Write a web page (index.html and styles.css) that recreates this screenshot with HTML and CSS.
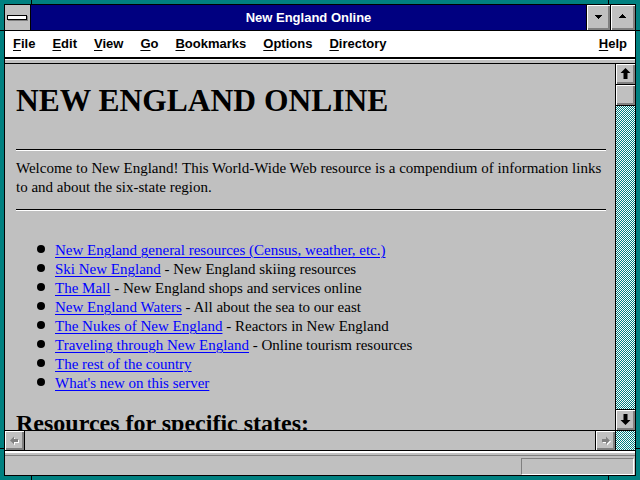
FILE: index.html
```html
<!DOCTYPE html>
<html>
<head>
<meta charset="utf-8">
<title>New England Online</title>
<link rel="stylesheet" href="styles.css">
</head>
<body>
<div class="window">
  <div class="titlebar">
    <div class="sysmenu"><span class="sysbar"></span></div>
    <div class="title">New England Online</div>
    <div class="tbtn tbtn-min"><svg class="tri" width="7" height="4" viewBox="0 0 7 4"><path d="M0 0h7v1H0zM1 1h5v1H1zM2 2h3v1H2zM3 3h1v1H3z" fill="#000"/></svg></div>
    <div class="tbtn tbtn-max"><svg class="tri" width="7" height="4" viewBox="0 0 7 4"><path d="M3 0h1v1H3zM2 1h3v1H2zM1 2h5v1H1zM0 3h7v1H0z" fill="#000"/></svg></div>
  </div>
  <div class="menubar">
    <span class="mi"><u>F</u>ile</span>
    <span class="mi"><u>E</u>dit</span>
    <span class="mi"><u>V</u>iew</span>
    <span class="mi"><u>G</u>o</span>
    <span class="mi"><u>B</u>ookmarks</span>
    <span class="mi"><u>O</u>ptions</span>
    <span class="mi"><u>D</u>irectory</span>
    <span class="mi help"><u>H</u>elp</span>
  </div>
  <div class="strip"></div>
  <div class="main">
    <div class="content">
      <h1>NEW ENGLAND ONLINE</h1>
      <hr>
      <p>Welcome to New England! This World-Wide Web resource is a compendium of information links to and about the six-state region.</p>
      <hr class="second">
      <ul>
        <li><a href="#">New England general resources (Census, weather, etc.)</a></li>
        <li><a href="#">Ski New England</a> - New England skiing resources</li>
        <li><a href="#">The Mall</a> - New England shops and services online</li>
        <li><a href="#">New England Waters</a> - All about the sea to our east</li>
        <li><a href="#">The Nukes of New England</a> - Reactors in New England</li>
        <li><a href="#">Traveling through New England</a> - Online tourism resources</li>
        <li><a href="#">The rest of the country</a></li>
        <li><a href="#">What's new on this server</a></li>
      </ul>
      <h2>Resources for specific states:</h2>
    </div>
    <div class="vscroll">
      <div class="sbtn up"><svg width="19" height="20" viewBox="0 0 19 20"><path d="M9.5 4L14.5 9H11.5V15H7.5V9H4.5Z" fill="#000"/></svg></div>
      <div class="thumb"></div>
      <div class="track"></div>
      <div class="sbtn down"><svg width="19" height="20" viewBox="0 0 19 20"><path d="M9.5 15L14.5 10H11.5V4H7.5V10H4.5Z" fill="#000"/></svg></div>
    </div>
    <div class="hscroll">
      <div class="sbtn left"><svg width="19" height="19" viewBox="0 0 19 19"><path d="M6 10.5L10 6.5V9H14V12H10V14.5Z" fill="#fff"/><path d="M5 9.5L9 5.5V8H13V11H9V13.5Z" fill="#808080"/></svg></div>
      <div class="htrack"></div>
      <div class="sbtn right"><svg width="19" height="19" viewBox="0 0 19 19"><path d="M15 10.5L11 6.5V9H7V12H11V14.5Z" fill="#fff"/><path d="M14 9.5L10 5.5V8H6V11H10V13.5Z" fill="#808080"/></svg></div>
    </div>
    <div class="corner"></div>
  </div>
  <div class="statusbar"><div class="statusbox"></div></div>
</div>
</body>
</html>
```

FILE: styles.css
```css
html, body {
  margin: 0;
  height: 100%;
  overflow: hidden;
}

body {
  background:
    linear-gradient(#000, #000) 31px 0 / 1px 4px no-repeat,
    linear-gradient(#000, #000) 608px 0 / 1px 4px no-repeat,
    linear-gradient(#000, #000) 31px 476px / 1px 4px no-repeat,
    linear-gradient(#000, #000) 608px 476px / 1px 4px no-repeat,
    linear-gradient(#000, #000) 0 30px / 4px 1px no-repeat,
    linear-gradient(#000, #000) 636px 30px / 4px 1px no-repeat,
    linear-gradient(#000, #000) 0 448px / 4px 1px no-repeat,
    linear-gradient(#000, #000) 636px 448px / 4px 1px no-repeat,
    #008080;
}

.window {
  box-sizing: border-box;
  width: 632px;
  height: 472px;
  margin: 4px 0 0 4px;
  border: 1px solid #000;
  background: #c0c0c0;
  display: flex;
  flex-direction: column;
}

/* title bar */
.titlebar {
  display: flex;
  height: 25px;
  border-bottom: 1px solid #000;
  background: #000080;
  flex: none;
}

.sysmenu {
  width: 25px;
  border-right: 1px solid #000;
  background: #c0c0c0;
  display: flex;
  align-items: center;
  justify-content: center;
}

.sysbar {
  display: block;
  width: 18px;
  height: 3px;
  background: #fff;
  border: 1px solid #000;
  box-shadow: 1px 1px 0 #808080;
  margin: 0 1px 0 0;
}

.title {
  flex: 1;
  color: #fff;
  font: bold 13px/26px "Liberation Sans", Arial, sans-serif;
  text-align: center;
  white-space: nowrap;
}

.tbtn {
  border-left: 1px solid #000;
  background: #c0c0c0;
  box-shadow: inset 1px 1px #fff, inset -1px -1px #808080, inset -2px -2px #808080;
  display: flex;
  align-items: center;
  justify-content: center;
}

.tbtn-min { width: 23px; }
.tbtn-max { width: 24px; }

.tri {
  display: block;
  shape-rendering: crispEdges;
}

.tbtn-min .tri { margin: 0 1px 1px 0; }
.tbtn-max .tri { margin: 0 1px 3px 0; }

/* menu */
.menubar {
  flex: none;
  height: 26px;
  background: #fff;
  display: flex;
  align-items: center;
  gap: 17px;
  padding: 0 8px 0 8px;
  font: bold 13px/28px "Liberation Sans", Arial, sans-serif;
  color: #000;
  white-space: nowrap;
}

.mi u {
  text-decoration: underline;
  text-decoration-thickness: 1px;
  text-underline-offset: 2px;
}

.help { margin-left: auto; }

.strip {
  flex: none;
  height: 7px;
  background: linear-gradient(#000 0 2px, #fff 2px 3px, #c0c0c0 3px 6px, #000 6px 7px);
}

/* main area */
.main {
  flex: none;
  display: grid;
  grid-template-columns: 610px 20px;
  grid-template-rows: 366px 21px;
}

.content {
  background: #c0c0c0;
  overflow: hidden;
  padding: 0 9px 0 11px;
  font: 15px/19px "Liberation Serif", "Times New Roman", serif;
  color: #000;
}

.content h1 {
  font: bold 31.5px/36px "Liberation Serif", "Times New Roman", serif;
  margin: 19px 0 0;
  white-space: nowrap;
}

.content hr {
  margin: 30px 0 0;
  border: 0;
  border-top: 1px solid #000;
  border-bottom: 1px solid #fff;
  height: 0;
}

.content hr.second { margin-top: 12px; }

.content p {
  margin: 8px -6px 0 0;
}

.content ul {
  margin: 30px 0 0;
  padding: 0 0 0 39px;
  list-style: none;
}

.content li { white-space: nowrap; }

.content li::before {
  content: "";
  display: inline-block;
  width: 8px;
  height: 8px;
  border-radius: 50%;
  background: #000;
  margin: 0 10px 0 -18px;
  vertical-align: 2px;
}

.content a {
  color: #0000ff;
  text-decoration: underline;
  text-decoration-thickness: 1px;
  text-underline-offset: 2px;
}

.content h2 {
  font: bold 24px/28px "Liberation Serif", "Times New Roman", serif;
  margin: 16px 0 0;
  white-space: nowrap;
}

/* scrollbars */
.sbtn {
  background: #c0c0c0;
  box-shadow: inset 1px 1px #fff, inset -1px -1px #808080, inset -2px -2px #808080;
  display: flex;
  align-items: center;
  justify-content: center;
}

.sbtn svg { display: block; }

.vscroll {
  border-left: 1px solid #000;
  display: flex;
  flex-direction: column;
}

.vscroll .up {
  height: 20px;
  border-bottom: 1px solid #000;
  flex: none;
}

.thumb {
  flex: none;
  height: 20px;
  border-bottom: 1px solid #000;
  background: #c0c0c0;
  box-shadow: inset 1px 1px #fff, inset -1px -1px #808080, inset -2px -2px #808080;
}

.track, .corner {
  background-color: #008080;
  background-image: conic-gradient(#008080 0 25%, #fff 0 50%, #008080 0 75%, #fff 0);
  background-size: 2px 2px;
}

.track { flex: 1; }

.vscroll .down {
  height: 20px;
  border-top: 1px solid #000;
  flex: none;
}

.hscroll {
  border-top: 1px solid #000;
  border-bottom: 1px solid #000;
  display: flex;
}

.hscroll .left {
  width: 19px;
  border-right: 1px solid #000;
}

.htrack {
  flex: 1;
  background: #c0c0c0;
}

.hscroll .right {
  width: 19px;
  border-left: 1px solid #000;
}

.corner {
  border-left: 1px solid #000;
  border-top: 1px solid #000;
  border-bottom: 1px solid #000;
}

/* status bar */
.statusbar {
  flex: 1;
  background: linear-gradient(#fff 0 2px, #c0c0c0 2px 4px, #808080 4px 5px, #c0c0c0 5px);
  display: flex;
  justify-content: flex-end;
  align-items: flex-end;
}

.statusbox {
  width: 111px;
  height: 15px;
  border: 1px solid;
  border-color: #808080 #fff #fff #808080;
  margin-right: 1px;
}
```
